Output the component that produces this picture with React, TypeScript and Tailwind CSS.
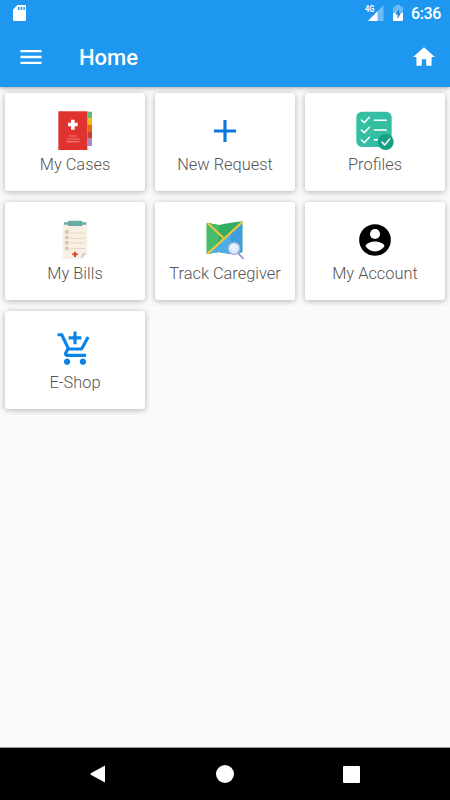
import type { ReactNode } from "react";
import { MdAdd, MdHome, MdMenu } from "react-icons/md";

function CasesIcon() {
  return (
    <svg viewBox="0 0 150 150" className="size-[50px]">
      <path d="M112 20h14v20h-14z" fill="#59bd78" />
      <path d="M112 40h14v20h-14z" fill="#f1bd0c" />
      <path d="M112 60h14v21h-14z" fill="#e26a14" />
      <path d="M112 81h14v20h-14z" fill="#c63f33" />
      <path d="M112 101h14v22h-14z" fill="#a687c5" />
      <path d="M25 19h87v116H25z" fill="#e0322e" />
      <path d="M63 44h11v9h9v11h-9v10H63V64h-9V53h9z" fill="#fff" />
      <path d="M57 93h24M49 102h40M49 110h40" stroke="#ee7b72" strokeWidth="3.5" />
    </svg>
  );
}

function ProfilesIcon() {
  return (
    <svg viewBox="0 0 150 150" className="size-[50px]" fill="none">
      <rect x="19" y="20" width="106" height="106" rx="17" fill="#34bfa3" />
      <path
        d="M34 45l9 8 15-16M34 75l9 8 15-16M34 105l9 8 15-16M73 46h36M73 75h36M73 104h13"
        stroke="#fff"
        strokeWidth="4.5"
        strokeLinecap="round"
        strokeLinejoin="round"
      />
      <circle cx="107" cy="111" r="24" fill="#159f85" />
      <path
        d="M96 111l8 9 15-18"
        stroke="#fff"
        strokeWidth="4.5"
        strokeLinecap="round"
        strokeLinejoin="round"
      />
    </svg>
  );
}

function BillsIcon() {
  return (
    <svg viewBox="0 -3 150 150" className="size-[50px]">
      <path d="M43 25h64a5 5 0 015 5v84l-18 18H43a5 5 0 01-5-5V30a5 5 0 015-5z" fill="#f8f0e5" />
      <path d="M112 114l-18 18v-11q0-7 7-7z" fill="#d5d3ce" />
      <path d="M42 22h12v-2q0-3 4-3h35q4 0 4 3v2h12v7H97v4H54v-4H42z" fill="#6aaba8" />
      <path
        d="M45 45h11v11H45zM45 62h11v11H45zM45 78h11v11H45zM45 95h11v11H45z"
        fill="#dcc5ac"
      />
      <path d="M60 54h46M60 70h46M60 84h46M60 101h46" stroke="#e6d6c2" strokeWidth="3" />
      <path d="M72 110h6v5h5v6h-5v5h-6v-5h-5v-6h5z" fill="#e34625" />
    </svg>
  );
}

function TrackIcon() {
  return (
    <svg viewBox="0 -3 150 150" className="size-[50px]">
      <path d="M20 23l36 7 36-7 35-4v93l-35 5-36-6-36 6z" fill="#35ad62" />
      <path d="M20 23l36 7v81l-36 6z" fill="#47bc6c" />
      <path d="M127 19v93l-35 5-36-6-36 6z" fill="#3e9ddd" />
      <path d="M92 53v64l-36-6-36 6z" fill="#4aaee7" />
      <path d="M22 24l48 44" fill="none" stroke="#f3c63d" strokeWidth="6" />
      <path d="M127 21L22 117" fill="none" stroke="#f3c63d" strokeWidth="7" />
      <path d="M115 115l14 15" stroke="#8f94cd" strokeWidth="5" strokeLinecap="round" />
      <circle cx="102" cy="100" r="18" fill="#d4ebfb" stroke="#9da3d7" strokeWidth="3.5" />
      <path d="M91 101l13-13M97 108l14-14" stroke="#eff9ff" strokeWidth="4" />
    </svg>
  );
}

function AccountIcon() {
  return (
    <svg viewBox="0 0 24 24" className="mt-0.5 size-[38px]">
      <circle cx="12" cy="12" r="10" />
      <circle cx="12" cy="8.200" r="3.200" fill="#fff" />
      <path
        d="M12 19.200c-2.500 0-4.710-1.280-6-3.220.030-1.990 4-3.080 6-3.080s5.970 1.090 6 3.080c-1.290 1.940-3.500 3.220-6 3.220z"
        fill="#fff"
      />
    </svg>
  );
}

function ShopIcon() {
  return (
    <svg viewBox="0 0 24 24" className="mt-0.5 size-[38px]" fill="#0c83e6">
      <path d="M11 9h2V6h3V4h-3V1h-2v3H8v2h3v3zm-4 9c-1.1 0-1.99.9-1.99 2S5.9 22 7 22s2-.9 2-2-.9-2-2-2zm10 0c-1.1 0-1.99.9-1.99 2s.89 2 1.99 2 2-.9 2-2-.9-2-2-2zm-9.83-3.25l.03-.12.9-1.63h7.45c.75 0 1.41-.41 1.75-1.03l3.86-7.01L19.42 4h-.01l-1.1 2-2.76 5H8.53l-.13-.27L6.16 6l-.95-2-.94-2H1v2h2l3.6 7.59-1.35 2.45c-.16.28-.25.61-.25.96 0 1.1.9 2 2 2h12v-2H7.42c-.13 0-.25-.11-.25-.25z" />
    </svg>
  );
}

const menu: { label: string; icon: ReactNode }[] = [
  { label: "My Cases", icon: <CasesIcon /> },
  { label: "New Request", icon: <MdAdd size={38} className="mt-0.5 text-[#0c78dc]" /> },
  { label: "Profiles", icon: <ProfilesIcon /> },
  { label: "My Bills", icon: <BillsIcon /> },
  { label: "Track Caregiver", icon: <TrackIcon /> },
  { label: "My Account", icon: <AccountIcon /> },
  { label: "E-Shop", icon: <ShopIcon /> },
];

function StatusBar() {
  return (
    <div className="flex h-[27px] items-center pr-[9px] pl-[13px]">
      <svg viewBox="0 0 13 16" className="mt-[-1px] h-4 w-[13px]">
        <path d="M4.500 0H12a1 1 0 011 1v14a1 1 0 01-1 1H1a1 1 0 01-1-1V4.500z" fill="#fff" />
        <path d="M5 2h1.500v3H5zM7.700 2h1.500v3H7.700zM10.400 2h1.500v3h-1.500z" fill="#1e97f1" />
      </svg>
      <div className="ml-auto flex items-center">
        <span className="mt-[-9px] w-[10px] origin-left scale-x-[0.78] text-[9.5px] leading-none font-bold">
          4G
        </span>
        <svg viewBox="0 0 16 16" className="mt-[-1px] mr-[9px] ml-[-7px] h-4 w-4">
          <path d="M15.500 0v16H0z" fill="#fff" fillOpacity=".35" />
          <path d="M9.500 6.200V16H0z" fill="#fff" />
        </svg>
        <svg viewBox="0 0 10 16" className="mt-[-1px] mr-[8px] h-4 w-[10px]">
          <path d="M0 2.500q0-1 1-1h2V0h4v1.500h2q1 0 1 1V8H0z" fill="#fff" fillOpacity=".35" />
          <path d="M0 8h10v7q0 1-1 1H1q-1 0-1-1z" fill="#fff" />
          <path d="M6 4L2.500 9.500h2V14L8 8H6z" fill="#1e80d4" />
        </svg>
        <span className="mt-px text-[16px] leading-none font-medium tracking-[-0.4px]">
          6:36
        </span>
      </div>
    </div>
  );
}

function MenuCard({ label, icon }: { label: string; icon: ReactNode }) {
  return (
    <div className="h-[110px] overflow-hidden px-[5px] pt-[6px]">
      <button className="flex h-[98px] w-full flex-col items-center rounded-[3px] bg-white pt-3 shadow-[0_1px_6px_rgba(0,0,0,0.3)]">
        <span className="flex h-[50px] items-center justify-center">{icon}</span>
        <span className="text-[16.400px] leading-[19px] font-light whitespace-nowrap text-[#555]">
          {label}
        </span>
      </button>
    </div>
  );
}

export default function App() {
  return (
    <div className="flex h-[800px] w-[450px] flex-col bg-[#fafafa] font-['Roboto',sans-serif]">
      <header className="relative h-[87px] bg-[#1e97f1] text-white shadow-[0_1px_4px_rgba(0,0,0,0.35)]">
        <StatusBar />
        <div className="flex h-[60px] items-center pr-[13px] pl-[17px]">
          <MdMenu size={28} />
          <h1 className="mt-px ml-[34px] text-[22px] font-medium">Home</h1>
          <MdHome size={26} className="mt-[-1px] ml-auto" />
        </div>
      </header>

      <main className="flex-1">
        <div className="grid auto-rows-[109px] grid-cols-3">
          {menu.map((item) => (
            <MenuCard key={item.label} label={item.label} icon={item.icon} />
          ))}
        </div>
      </main>

      <nav className="flex h-[53px] items-center justify-between border-t border-[#999] bg-black pr-[90px] pl-[90px]">
        <svg viewBox="0 0 16 18" className="h-[18px] w-4">
          <path d="M15 .500v17L.800 9.800Q0 9 .800 8.200z" fill="#fff" />
        </svg>
        <span className="size-[18px] rounded-full bg-white" />
        <span className="size-[17px] rounded-[1px] bg-white" />
      </nav>
    </div>
  );
}
